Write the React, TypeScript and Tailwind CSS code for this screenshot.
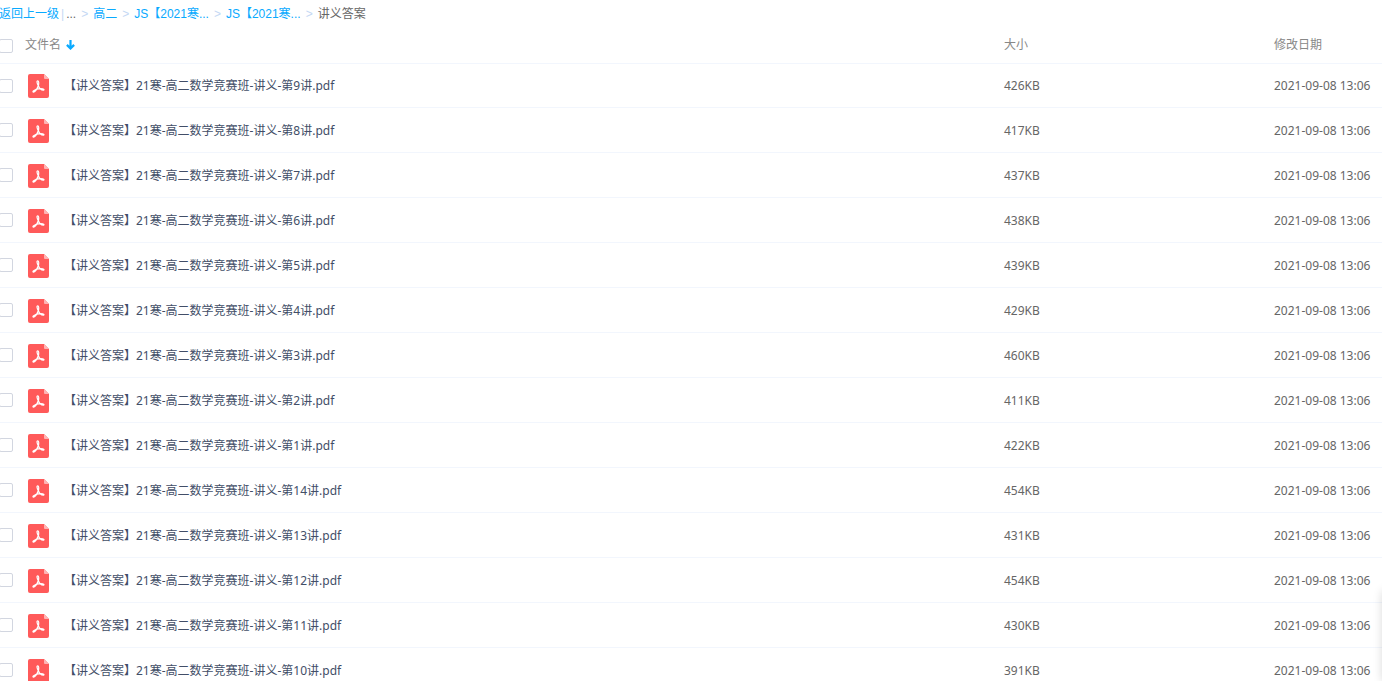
import { Fragment } from "react";

const files = [
  { lesson: 9, size: "426KB" },
  { lesson: 8, size: "417KB" },
  { lesson: 7, size: "437KB" },
  { lesson: 6, size: "438KB" },
  { lesson: 5, size: "439KB" },
  { lesson: 4, size: "429KB" },
  { lesson: 3, size: "460KB" },
  { lesson: 2, size: "411KB" },
  { lesson: 1, size: "422KB" },
  { lesson: 14, size: "454KB" },
  { lesson: 13, size: "431KB" },
  { lesson: 12, size: "454KB" },
  { lesson: 11, size: "430KB" },
  { lesson: 10, size: "391KB" },
];

const crumbs = ["高二", "JS【2021寒...", "JS【2021寒..."];

function Tick({ label }: { label: string }) {
  return (
    <input
      type="checkbox"
      aria-label={label}
      className="block h-3.5 w-3.5 shrink-0 appearance-none rounded-xs border border-[#d2d6e0] bg-white checked:bg-[#06a7ff]"
    />
  );
}

function PdfIcon() {
  return (
    <svg viewBox="0 0 21 24" className="block h-6 w-[21px] shrink-0" aria-hidden="true">
      <path d="M2 0H16L21 5V22a2 2 0 0 1-2 2H2a2 2 0 0 1-2-2V2a2 2 0 0 1 2-2z" fill="#ff5a5a" />
      <path d="M16 0L21 5H17a1 1 0 0 1-1-1z" fill="#ffb4b4" />
      <path
        d="M9.700 6.800c-1.100 0-.9 2 .6 4.900-.8 2.500-2.600 5.300-4.300 6.300-.9.500-1.500-.3-.7-1 1.900-1.500 6.200-2.500 9.400-2.200 1.500.2 1.700 1.300.5 1.300-1.900 0-3.900-2-4.800-4.400.6-2.700.4-4.900-.7-4.900z"
        fill="none"
        stroke="#fff"
        strokeWidth="1.2"
        strokeLinejoin="round"
      />
    </svg>
  );
}

export default function App() {
  return (
    <main className="h-screen overflow-hidden bg-white font-['Noto_Sans','Noto_Sans_CJK_SC',sans-serif] text-xs text-[#424e67]">
      <div className="-ml-px">
        <nav
          aria-label="路径"
          className="flex h-7 items-center whitespace-nowrap font-['Liberation_Sans','Noto_Sans_CJK_SC',sans-serif] text-[#09aaff]"
        >
          <a href="#back">返回上一级</a>
          <span className="mx-0.5 text-[#c4d8f4]">|</span>
          <span className="text-[#666666]">...</span>
          {crumbs.map((name, i) => (
            <Fragment key={i}>
              <span className="mx-[5px] text-[#c4d8f4]">&gt;</span>
              <a href={`#level-${i}`}>{name}</a>
            </Fragment>
          ))}
          <span className="mx-[5px] text-[#c4d8f4]">&gt;</span>
          <span className="text-[#666666]">讲义答案</span>
        </nav>
        <table className="w-full table-fixed border-separate border-spacing-0 whitespace-nowrap text-left">
          <colgroup>
            <col className="w-[26px]" />
            <col />
            <col className="w-[270px]" />
            <col className="w-[108px]" />
          </colgroup>
          <thead className="text-[#888888]">
            <tr className="h-9">
              <th className="border-b border-[#f2f6fd] p-0 font-normal">
                <Tick label="全选" />
              </th>
              <th className="border-b border-[#f2f6fd] p-0 pb-0.5 font-normal">
                <button type="button" className="flex items-center gap-[5px]">
                  文件名
                  <svg viewBox="0 0 9 10" className="h-2.5 w-[9px]" aria-hidden="true">
                    <path d="M4.500 0V8M0.900 4.900L4.500 8.500L8.100 4.900" fill="none" stroke="#09aaff" strokeWidth="2.200" />
                  </svg>
                </button>
              </th>
              <th className="border-b border-[#f2f6fd] p-0 pb-0.5 font-normal">大小</th>
              <th className="border-b border-[#f2f6fd] p-0 pb-0.5 font-normal">修改日期</th>
            </tr>
          </thead>
          <tbody>
            {files.map(({ lesson, size }) => {
              const name = `【讲义答案】21寒-高二数学竞赛班-讲义-第${lesson}讲.pdf`;
              return (
                <tr key={lesson} className="h-[45px] first:h-11">
                  <td className="border-b border-[#f2f6fd] p-0">
                    <Tick label={name} />
                  </td>
                  <td className="border-b border-[#f2f6fd] p-0 pt-px">
                    <div className="flex items-center gap-[15px] pl-[3px]">
                      <PdfIcon />
                      <a href={`#file-${lesson}`}>{name}</a>
                    </div>
                  </td>
                  <td className="border-b border-[#f2f6fd] p-0 pt-px text-[#666666]">{size}</td>
                  <td className="border-b border-[#f2f6fd] p-0 pt-px text-[#666666]">2021-09-08 13:06</td>
                </tr>
              );
            })}
          </tbody>
        </table>
      </div>
      <div className="fixed -right-2.5 bottom-0 h-[90px] w-2.5 shadow-[0_0_10px_rgba(0,0,0,0.15)]" />
    </main>
  );
}
